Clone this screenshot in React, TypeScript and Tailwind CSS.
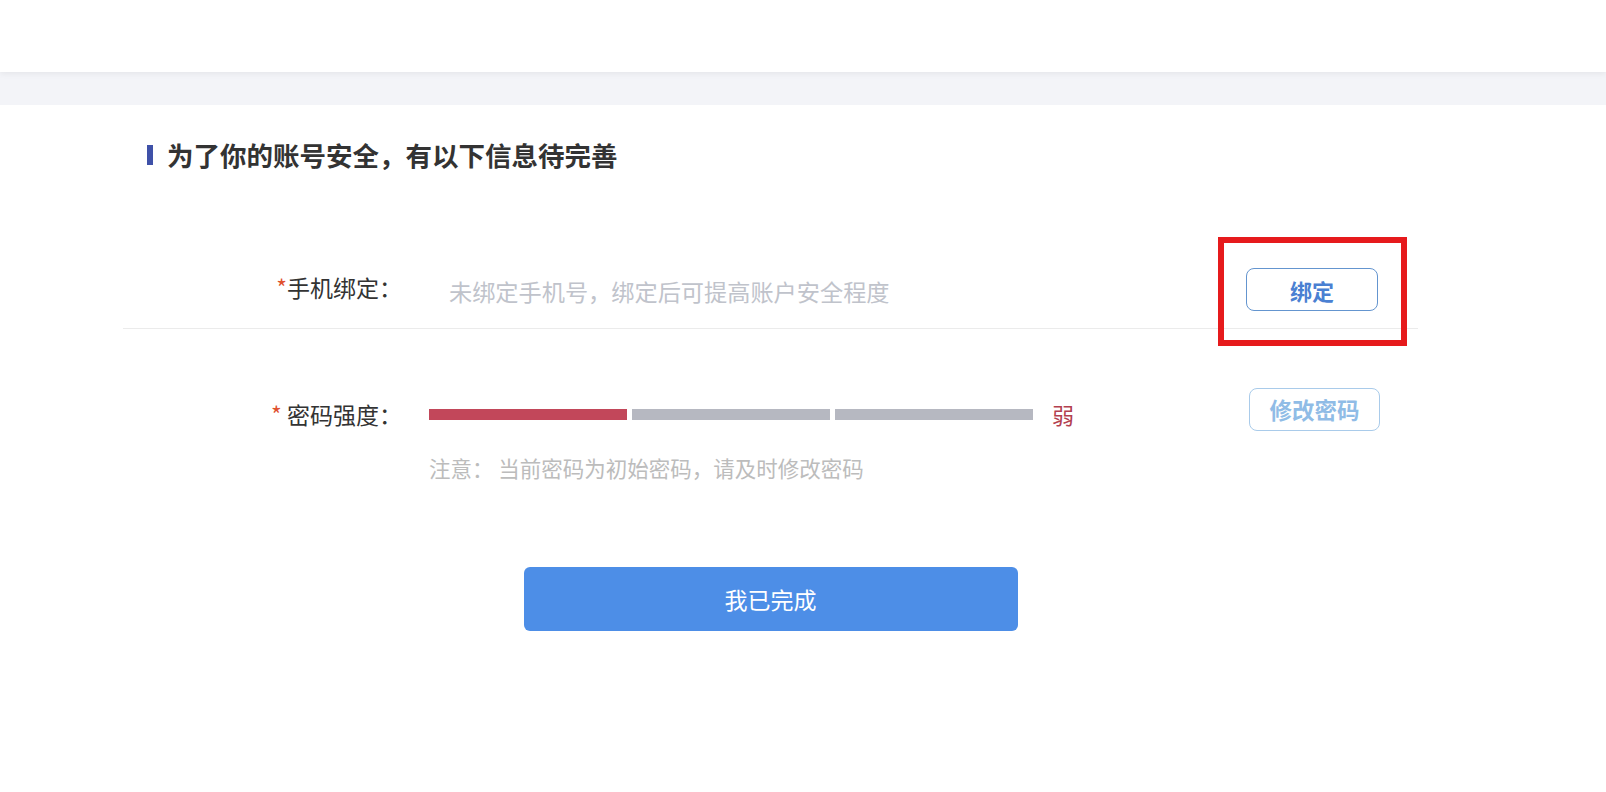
const font = { fontFamily: '"Noto Sans CJK SC", "Noto Sans", sans-serif' };

function StrengthBar() {
  return (
    <div className="flex items-center">
      <div className="flex gap-[5px]">
        <div className="h-[11px] w-[198px] bg-[#c2475a]"></div>
        <div className="h-[11px] w-[198px] bg-[#b6b8c1]"></div>
        <div className="h-[11px] w-[198px] bg-[#b6b8c1]"></div>
      </div>
      <span className="ml-[19px] text-[22px] leading-none text-[#b3404f]">弱</span>
    </div>
  );
}

export default function App() {
  return (
    <div className="min-h-[792px] bg-white" style={font}>
      <div className="relative z-10 h-[72px] bg-white shadow-[0_2px_6px_rgba(0,0,0,0.06)]"></div>
      <div className="h-[33px] bg-[#f3f4f8]"></div>

      <div className="ml-[123px] w-[1295px]">
        <div className="mt-[37px] flex h-[26px] items-center pl-[24px]">
          <div className="h-[20px] w-[6px] bg-[#3f51a8]"></div>
          <h1 className="ml-[14px] text-[26.5px] font-bold leading-none text-[#333333]">
            为了你的账号安全，有以下信息待完善
          </h1>
        </div>

        <div className="mt-[79px] flex h-[82px] items-center border-b border-[#ebebeb]">
          <div className="w-[279px] text-right text-[23px] leading-none text-[#333333]">
            <span className="text-[#e0502e]">*</span>手机绑定：
          </div>
          <div className="ml-[27px] mt-[8px] flex-1 pl-[20px] text-[23.2px] leading-none text-[#c0c3cb]">
            未绑定手机号，绑定后可提高账户安全程度
          </div>
          <div className="relative mr-[40px] mt-[4px]">
            <button className="h-[43px] w-[132px] rounded-[8px] border border-[#6495cf] bg-white text-[22px] font-bold leading-none text-[#4a80d2]">
              绑定
            </button>
            <div className="pointer-events-none absolute -left-[28px] -top-[31px] h-[109px] w-[189px] border-[6px] border-[#e61a1c]"></div>
          </div>
        </div>

        <div className="mt-[59px] flex h-[52px] items-center">
          <div className="w-[279px] text-right text-[23px] leading-none text-[#333333]">
            <span className="text-[#e0502e]">*</span> 密码强度：
          </div>
          <div className="ml-[27px] flex-1">
            <StrengthBar />
          </div>
          <button className="mr-[38px] h-[43px] w-[131px] self-start rounded-[8px] border border-[#a9cbea] bg-white text-[22.5px] font-bold leading-none text-[#90bce6]">
            修改密码
          </button>
        </div>

        <p className="ml-[306px] mt-[17px] text-[21.5px] leading-[21px] text-[#bcbcbc]">
          注意：&nbsp;当前密码为初始密码，请及时修改密码
        </p>

        <div className="mt-[89px] flex justify-center">
          <button className="h-[64px] w-[494px] rounded-[6px] bg-[#4d8ee7] text-[23px] leading-none text-white">
            我已完成
          </button>
        </div>
      </div>
    </div>
  );
}
